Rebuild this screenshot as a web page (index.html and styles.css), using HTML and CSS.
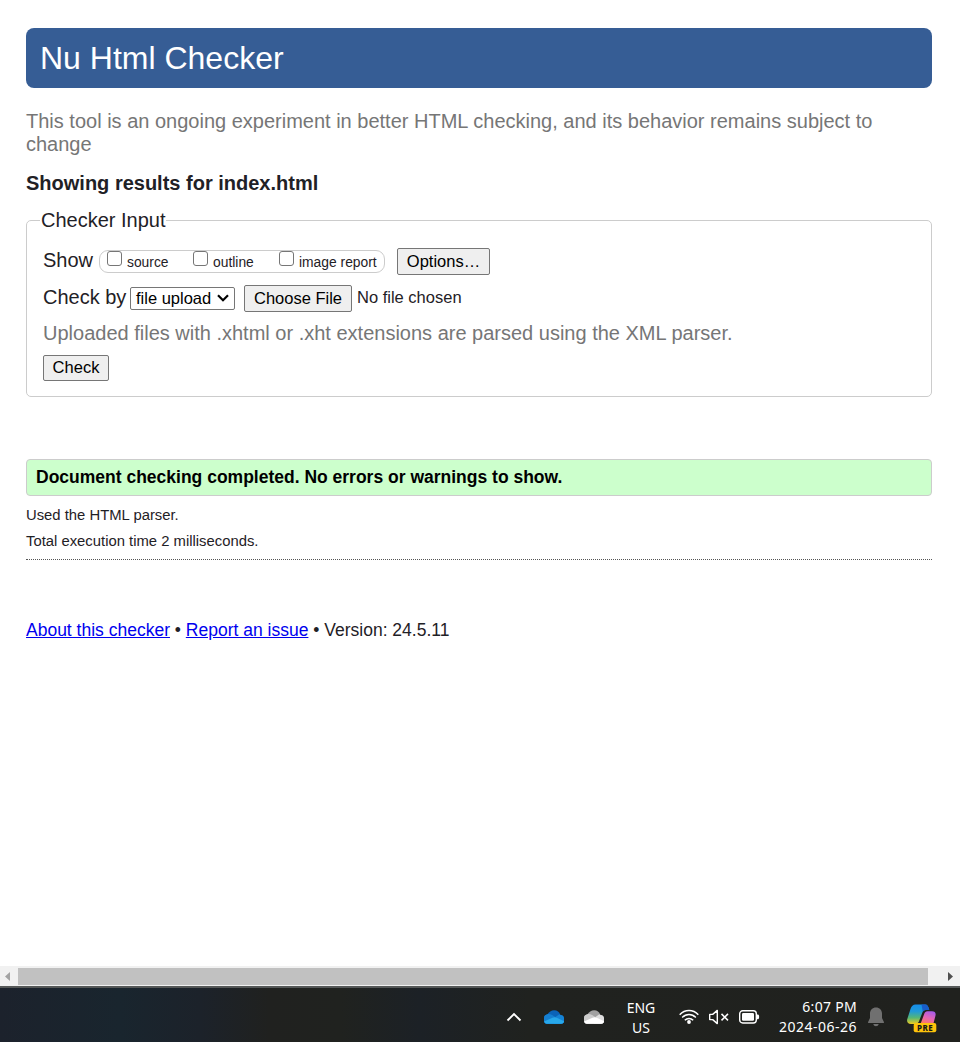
FILE: index.html
```html
<!DOCTYPE html>
<html lang="en">
<head>
<meta charset="utf-8">
<title>Nu Html Checker</title>
<link rel="stylesheet" href="styles.css">
</head>
<body>
<main class="page">
  <h1 class="banner"><span class="banner-text">Nu Html Checker</span></h1>
  <p class="intro">This tool is an ongoing experiment in better HTML checking, and its behavior remains subject to change</p>
  <h2 class="results-title"><span class="results-text">Showing results for index.html</span></h2>
  <fieldset class="checker">
    <legend class="legend">Checker Input</legend>
    <div class="row show-row">
      <span class="label show-label">Show</span>
      <span class="choices">
        <label class="choice source"><span class="box"></span><span class="choice-text">source</span></label>
        <label class="choice outline"><span class="box"></span><span class="choice-text">outline</span></label>
        <label class="choice report"><span class="box"></span><span class="choice-text">image report</span></label>
      </span>
      <button class="button options">Options…</button>
    </div>
    <div class="row by-row">
      <span class="label by-label">Check by</span>
      <span class="select"><span>file upload</span><svg width="12" height="8" viewBox="0 0 12 8"><path d="M1 1.300 6 6.300l5-5" fill="none" stroke="#000" stroke-width="2.200"/></svg></span>
      <button class="button choose">Choose File</button>
      <span class="file-name">No file chosen</span>
    </div>
    <p class="hint"><span class="hint-text">Uploaded files with .xhtml or .xht extensions are parsed using the XML parser.</span></p>
    <button class="button check">Check</button>
  </fieldset>
  <p class="success"><span class="success-text">Document checking completed. No errors or warnings to show.</span></p>
  <p class="detail">Used the HTML parser.</p>
  <p class="detail">Total execution time 2 milliseconds.</p>
  <hr class="rule">
  <p class="footer"><a href="#">About this checker</a> • <a href="#">Report an issue</a> • Version: 24.5.11</p>
</main>
<div class="scrollbar">
  <svg class="arrow" width="18" height="20" viewBox="0 0 18 20"><path d="M10 6v9L5 10.500z" fill="#a3a3a3"/></svg>
  <span class="thumb"></span>
  <svg class="arrow-right" width="32" height="20" viewBox="0 0 32 20"><path d="M20 6v9l5-4.500z" fill="#505050"/></svg>
</div>
<div class="taskbar">
  <svg class="chevron" width="16" height="12" viewBox="0 0 16 12"><path d="m1.500 9.500 6.500-6.500 6.500 6.500" fill="none" stroke="#fff" stroke-width="1.900"/></svg>
  <svg class="cloud-blue" width="20" height="14" viewBox="0 0 20 14"><defs><clipPath id="cloud"><path d="M3 13.700C1 13.700 0 12.500 0 10.500V8C0 6 1.300 4.800 3.500 4.300 4.800 2 7.300.3 10.200.3c2.900 0 5.200 1.700 6 4.500C18.700 5.200 20 6.600 20 8.500v2.500c0 1.800-1.200 2.700-3.200 2.700z"/></clipPath></defs><g clip-path="url(#cloud)"><path d="M0 0h20v14H0z" fill="#0b63b8"/><path d="m10 8 5-3.500h6V14H10z" fill="#1583d5"/><path d="M0 4h5c2 0 3 1 5 2.200l9 5.800v2H0z" fill="#157fd0"/><path d="m0 11.500 8.500-3.800c1.500-.7 3-.7 4.300.1L20 11.200V14H0z" fill="#28a8ea"/></g></svg>
  <svg class="cloud-white" width="20" height="14" viewBox="0 0 20 14"><g clip-path="url(#cloud)"><path d="M0 0h20v14H0z" fill="#a1a1a1"/><path d="m10 8 5-3.500h6V14H10z" fill="#dedede"/><path d="M0 4h5c2 0 3 1 5 2.200l9 5.800v2H0z" fill="#ccc"/><path d="m0 11.500 8.500-3.800c1.500-.7 3-.7 4.300.1L20 11.200V14H0z" fill="#fff"/></g></svg>
  <div class="language"><span>ENG</span><span>US</span></div>
  <svg class="wifi" width="20" height="16" viewBox="0 0 20 16"><g fill="none" stroke="#fff" stroke-width="1.500"><path d="M.7 5.700c5.200-5.500 13.400-5.500 18.600 0M3.200 8.600c3.800-4 9.800-4 13.600 0M5.800 11.300c2.400-2.500 6-2.500 8.400 0"/></g><circle cx="10" cy="13" r="1.900" fill="#fff"/></svg>
  <svg class="volume" width="20" height="16" viewBox="0 0 20 16"><path d="M.7 5.400h3L8.300 1.400v13.200L3.700 10.600h-3z" fill="none" stroke="#fff" stroke-width="1.400" stroke-linejoin="round"/><path d="m12.500 4.900 6.500 6.500m0-6.500-6.500 6.500" stroke="#fff" stroke-width="1.500"/></svg>
  <svg class="battery" width="21" height="14" viewBox="0 0 21 14"><rect x=".7" y=".8" width="16.600" height="12.200" rx="3" fill="none" stroke="#fff" stroke-width="1.400"/><rect x="3" y="3" width="12" height="7.800" rx="1.200" fill="#fff"/><path d="M18 4.500h1c1.500.4 1.500 4.400 0 4.800h-1z" fill="#fff"/></svg>
  <div class="clock"><span class="time">6:07 PM</span><span class="date">2024-06-26</span></div>
  <svg class="bell" width="16" height="20" viewBox="0 0 16 20"><path d="M8 .5c-3.500 0-6 2.600-6 6V11L.1 15v1h15.800v-1L14 11V6.500c0-3.400-2.500-6-6-6zM5.300 17h5.400c-.4 1.500-1.400 2.200-2.700 2.200S5.700 18.500 5.300 17z" fill="#707070"/></svg>
  <svg class="copilot" width="30" height="30" viewBox="0 0 30 30">
    <defs>
      <linearGradient id="left" x1="0" y1="0" x2="0" y2="1"><stop offset="0" stop-color="#168de9"/><stop offset=".35" stop-color="#2099d8"/><stop offset=".68" stop-color="#55b676"/><stop offset="1" stop-color="#f1cc20"/></linearGradient>
      <linearGradient id="right" x1=".7" y1="0" x2=".3" y2="1"><stop offset="0" stop-color="#a65bea"/><stop offset=".5" stop-color="#e365b6"/><stop offset="1" stop-color="#ff7a62"/></linearGradient>
    </defs>
    <path d="M8.500.500H18c2.500 0 3.500 2 4.300 5.500H19c-2 0-3.200 1.200-3.800 3l-2.900 7.500c-.7 2.300-2 3.500-4.300 3.500H4c-3.200 0-4.500-2-3.700-5L3.500 5C4.500 2 6 .5 8.500.5z" fill="url(#left)"/>
    <path d="M14.500.500H18c2.500 0 3.500 2 4.300 5.500H19c-1.500 0-2.500.6-3.200 1.700z" fill="#1857c7" opacity=".9"/>
    <path d="M20.500 7.200H25c3 0 4.200 1.800 3.400 4.800L26.300 20H13.500l3.700-10c.7-1.800 1.500-2.800 3.300-2.800z" fill="url(#right)"/>
    <rect x="6.700" y="19" width="22.600" height="9.300" rx="2" fill="#fdc30c"/>
    <text class="pre" x="18.200" y="26.600" text-anchor="middle">PRE</text>
  </svg>
</div>
</body>
</html>
```
FILE: styles.css
```css
* { box-sizing: border-box; }
body {
  margin: 0;
  height: 1042px;
  display: flex;
  flex-direction: column;
  overflow: hidden;
  background: #fff;
  color: #1f2126;
  font-family: "Liberation Sans", Arial, sans-serif;
  font-size: 20px;
}
h1, h2, p { margin: 0; }
.page { height: 966px; padding: 28px 28px 0 26px; white-space: nowrap; }
.banner {
  height: 60px;
  padding-left: 14px;
  border-radius: 8px;
  background: #365d95;
  color: #fff;
  font-size: 32px;
  font-weight: 400;
  line-height: 60px;
}
.intro { margin-top: 22px; color: #767676; line-height: 23px; white-space: normal; }
.results-title { margin-top: 15px; font-size: 20px; line-height: 24px; }
.checker {
  height: 189px;
  margin: 13px 0 0;
  padding: 14px 16px 0;
  border: 1px solid #ccc;
  border-radius: 5px;
}
.legend { margin-left: -3px; padding: 0 0 0 1px; line-height: 24px; }
.row { display: flex; align-items: center; height: 30px; }
.by-row { margin-top: 7px; }
.label { padding-bottom: 2px; }
.show-label { width: 56px; line-height: 28px; }
.choices {
  display: flex;
  width: 286px;
  height: 23px;
  padding-left: 7px;
  border: 1px solid #ccc;
  border-radius: 9px;
  font-size: 13.850px;
}
.choice { display: flex; }
.source { width: 86px; }
.outline { width: 86px; }
.box { width: 15px; height: 15px; margin-right: 5px; border: 1px solid #767676; border-radius: 3px; background: #fff; }
.choice-text { line-height: 23px; }
.button {
  flex: none;
  padding: 0;
  border: 1px solid #767676;
  border-radius: 2px;
  background: #efefef;
  color: #000;
  font: 16.500px/24px "Liberation Sans", Arial, sans-serif;
}
.options { width: 93px; height: 27px; margin-left: 12px; }
.by-label { width: 87px; }
.select {
  display: flex;
  align-items: center;
  justify-content: space-between;
  width: 105px;
  height: 23px;
  padding: 0 5px;
  border: 1px solid #767676;
  border-radius: 2px;
  color: #000;
  font-size: 16.500px;
}
.choose { width: 108px; height: 27px; margin-left: 9px; }
.file-name { margin-left: 5px; padding-bottom: 2px; font-size: 16.500px; }
.hint { margin-top: 8px; color: #767676; line-height: 24px; }
.check { display: block; width: 66px; height: 26px; margin-top: 10px; padding-bottom: 2px; line-height: 22px; }
.success {
  height: 37px;
  margin-top: 62px;
  padding-left: 9px;
  border: 1px solid #ccc;
  border-radius: 4px;
  background: #cfc;
  color: #000;
  font-size: 17.500px;
  font-weight: 700;
  line-height: 35px;
}
.detail { font-size: 14.840px; line-height: 26px; }
.success + .detail { margin-top: 6px; }
.rule { margin: 5px 0 0; border: 0; border-top: 1px dotted #555; }
.footer { margin-top: 57px; font-size: 17.500px; line-height: 26px; }
.footer a { color: #00e; text-decoration: underline; }
.scrollbar { display: flex; align-items: flex-start; height: 20px; background: #f1f1f1; }
.thumb { width: 910px; height: 17px; margin-top: 2px; background: #c1c1c1; }
.taskbar {
  display: flex;
  align-items: center;
  height: 56px;
  padding: 4px 0 0 506px;
  border-top: 2px solid #555858;
  background: linear-gradient(90deg, #1c222c 0, #19252e 120px, #1c222a 200px, #20211f 270px, #20221f 340px, #1c2126 420px, #20221f 530px, #20211e 100%);
  color: #fff;
  font-family: "Noto Sans", "Open Sans", sans-serif;
  font-size: 14px;
}
.taskbar svg { flex: none; }
.cloud-blue { margin-left: 22px; }
.cloud-white { margin-left: 20px; }
.language, .clock { display: flex; flex-direction: column; line-height: 20px; }
.language { width: 38px; margin-left: 18px; padding-top: 1px; align-items: center; }
.wifi { margin-left: 19px; }
.volume { margin-left: 10px; }
.battery { margin-left: 10px; }
.clock { width: 80px; margin-left: 18px; align-items: flex-end; }
.time { margin-right: 1px; letter-spacing: .3px; }
.date { margin-right: 1px; letter-spacing: .5px; }
.bell { margin-left: 10px; }
.copilot { margin: 3px 0 0 23px; }
.pre { fill: #171717; font: 800 8px "Noto Sans", sans-serif; letter-spacing: .5px; }
```
